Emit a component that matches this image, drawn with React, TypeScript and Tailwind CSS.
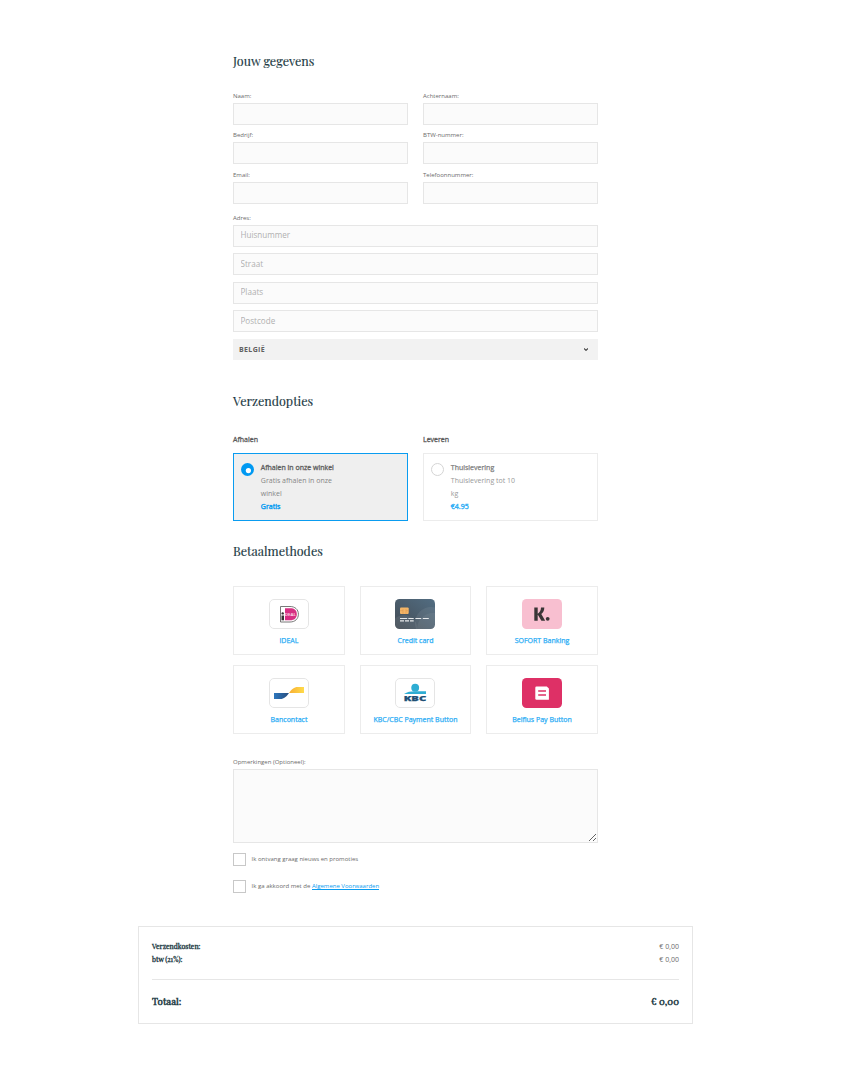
import React from "react";

function Heading({ children, className }: { children: React.ReactNode; className: string }) {
  return (
    <h2
      className={`h-5 whitespace-nowrap font-['Playfair_Display','Liberation_Serif',serif] text-[12.5px] leading-[18px] text-[#1d3a44] [-webkit-text-stroke:0.15px_#1d3a44] ${className}`}
    >
      {children}
    </h2>
  );
}

function Field({ label }: { label: string }) {
  return (
    <label className="block">
      <span className="block h-[11px] text-[6px] leading-[8px]">{label}</span>
      <input className="block h-[22px] w-full border border-[#e6e6e6] bg-[#fbfbfb] px-1.5 outline-none" />
    </label>
  );
}

function AddressInput({ placeholder, className }: { placeholder: string; className: string }) {
  return (
    <input
      placeholder={placeholder}
      className={`block h-[22px] w-full border border-[#e6e6e6] bg-[#fbfbfb] pl-[6.5px] text-[8.1px] outline-none placeholder:text-[#b0b0b0] ${className}`}
    />
  );
}

function Payment({ label, children }: { label: string; children: React.ReactNode }) {
  return (
    <button className="flex h-[69px] flex-col items-center border border-[#ececec] pt-3">
      <svg width="40" height="30" viewBox="0 0 40 30" className="block group-odd:ml-0">
        {children}
      </svg>
      <span className="mt-[7px] whitespace-nowrap text-[7px] leading-[10px] text-[#2badf5] [-webkit-text-stroke:0.25px_#2badf5]">
        {label}
      </span>
    </button>
  );
}

const Frame = () => (
  <rect x="0.5" y="0.5" width="39" height="29" rx="4.5" fill="#fff" stroke="#e5e5e5" />
);

export default function App() {
  return (
    <main className="min-h-[1075px] w-[856px] bg-white pt-[52px] font-['Open_Sans',sans-serif] text-[#6b6b6b]">
      <form className="ml-[233px] w-[365px]">
        <Heading className="">Jouw gegevens</Heading>
        <div className="mt-5 grid grid-cols-2 gap-x-[15px]">
          <div className="h-[39px]"><Field label="Naam:" /></div>
          <div className="h-[39px]"><Field label="Achternaam:" /></div>
          <div className="h-10"><Field label="Bedrijf:" /></div>
          <div className="h-10"><Field label="BTW-nummer:" /></div>
          <div className="h-[43px]"><Field label="Email:" /></div>
          <div className="h-[43px]"><Field label="Telefoonnummer:" /></div>
        </div>
        <div className="h-[11px] text-[6px] leading-[8px]">Adres:</div>
        <AddressInput placeholder="Huisnummer" className="pb-[4px]" />
        <AddressInput placeholder="Straat" className="mt-1.5 pb-[2px]" />
        <AddressInput placeholder="Plaats" className="mt-[7px] pb-[4px]" />
        <AddressInput placeholder="Postcode" className="mt-1.5 pb-[2px]" />
        <div className="mt-[7px] flex h-[21px] items-center justify-between bg-[#f2f2f2] pl-1.5 pr-[10px] text-[7px] font-bold tracking-[0.35px] text-[#606060]">
          <span className="pt-px">BELGIË</span>
          <svg width="4" height="3" viewBox="0 0 4 3" fill="none" stroke="#444" strokeWidth="1.1">
            <path d="M0 .5 2 2.4 4 .5" />
          </svg>
        </div>

        <Heading className="mt-8">Verzendopties</Heading>
        <div className="mt-[23px] grid grid-cols-2 gap-x-[15px]">
          <div>
            <h3 className="h-[18px] text-[7px] leading-[10px] text-[#5a5a5a] [-webkit-text-stroke:0.3px_#5a5a5a]">Afhalen</h3>
            <div className="flex h-[68px] border border-[#0a9cf0] bg-[#efefef] pl-[7px] pt-[7px]">
              <svg width="13" height="13" viewBox="0 0 13 13" className="mt-[2px]">
                <circle cx="6.5" cy="6.5" r="6.5" fill="#0099f2" />
                <circle cx="7.4" cy="7.6" r="2.6" fill="#fff" />
              </svg>
              <div className="ml-[6.8px] whitespace-nowrap text-[7px] leading-[13px] text-[#858585]">
                <p className="text-[#606060] [-webkit-text-stroke:0.3px_#606060]">Afhalen in onze winkel</p>
                <p>Gratis afhalen in onze</p>
                <p>winkel</p>
                <p className="text-[#0a9cf0] [-webkit-text-stroke:0.4px_#0a9cf0]">Gratis</p>
              </div>
            </div>
          </div>
          <div>
            <h3 className="h-[18px] text-[7px] leading-[10px] text-[#5a5a5a] [-webkit-text-stroke:0.3px_#5a5a5a]">Leveren</h3>
            <div className="flex h-[68px] border border-[#ececec] pl-[7px] pt-[7px]">
              <svg width="13" height="13" viewBox="0 0 13 13" className="mt-[2px]">
                <circle cx="6.5" cy="6.5" r="6" fill="#fff" stroke="#d4d4d4" />
              </svg>
              <div className="ml-[6.8px] whitespace-nowrap text-[7px] leading-[13px] text-[#999]">
                <p className="text-[#808080] [-webkit-text-stroke:0.25px_#808080]">Thuislevering</p>
                <p>Thuislevering tot 10</p>
                <p>kg</p>
                <p className="text-[#35b0f5] [-webkit-text-stroke:0.4px_#35b0f5]">€4.95</p>
              </div>
            </div>
          </div>
        </div>

        <Heading className="mt-[21px]">Betaalmethodes</Heading>
        <div className="mt-6 grid grid-cols-[112px_111px_112px] gap-x-[15px] gap-y-[10px] [&>button:nth-child(3n+2)>svg]:-ml-px">
          <Payment label="iDEAL">
            <Frame />
            <path d="M11.5 7.5H21C26 7.5 29.4 10.5 29.4 15.2S26 23 21 23h-9.5Z" fill="#fff" stroke="#6a6a6a" strokeWidth="0.9" />
            <path d="M16 9.3h5.2c4 0 6.6 2 6.6 5.9s-2.6 6-6.6 6H16Z" fill="#d62f82" />
            <circle cx="13.7" cy="14.4" r="1.2" fill="#333" />
            <path d="M12.5 16.5H15v4.8h-2.5Z" fill="#333" />
            <text x="15.8" y="16.8" fontSize="4.2" fontWeight="600" fill="#ffe6f3" textLength="11.2" lengthAdjust="spacingAndGlyphs">DEAL</text>
          </Payment>
          <Payment label="Credit card">
            <defs>
              <linearGradient id="card" x1="0" y1="1" x2="1" y2="0">
                <stop stopColor="#434c55" />
                <stop offset="1" stopColor="#526d82" />
              </linearGradient>
              <clipPath id="cardClip"><rect width="40" height="30" rx="4.5" /></clipPath>
            </defs>
            <g clipPath="url(#cardClip)">
              <rect width="40" height="30" fill="url(#card)" />
              <circle cx="9" cy="29" r="13" fill="#fff" opacity=".07" />
              <circle cx="36" cy="24" r="16" fill="#fff" opacity=".07" />
              <circle cx="38" cy="30" r="16" fill="#fff" opacity=".06" />
            </g>
            <rect x="5" y="8.6" width="8.7" height="6.5" rx="1" fill="#f3b567" />
            <path d="M8 10V15M11 10V15M5 11.7h3m3 0h3" stroke="#dc954c" strokeWidth=".5" />
            <path d="M5 19.5h7.2m1.1 0h5.4m1.7 0h5.8m1.6 0h6M5 21.8h4m1 0h4m1 0h3.7" stroke="#e7eaec" strokeWidth="1.2" />
          </Payment>
          <Payment label="SOFORT Banking">
            <rect width="40" height="30" rx="4.5" fill="#f8bfd0" />
            <path d="M12.3 8.5h3.4v13.3h-3.4ZM19 8.5h3.3c0 2.9-1 5-3 6.6l3.9 6.7h-3.8l-4-6.7c2.3-1.5 3.6-3.7 3.6-6.6Z" fill="#393536" />
            <circle cx="25.7" cy="19.8" r="1.9" fill="#393536" />
          </Payment>
          <Payment label="Bancontact">
            <Frame />
            <defs>
              <linearGradient id="bcBlue"><stop stopColor="#2d77be" /><stop offset="1" stopColor="#294d7d" /></linearGradient>
              <linearGradient id="bcYellow"><stop stopColor="#f8ae32" /><stop offset="1" stopColor="#ffdb4b" /></linearGradient>
            </defs>
            <path d="M5 15h15c-2.5 3.5-5 6-8.7 6H5Z" fill="url(#bcBlue)" />
            <path d="M20 15c2.5-3.5 5-6 8.7-6H35v6Z" fill="url(#bcYellow)" />
          </Payment>
          <Payment label="KBC/CBC Payment Button">
            <Frame />
            <circle cx="20.2" cy="9.7" r="3.9" fill="#2eadd3" />
            <path d="M9 16c3-2.2 7-2.8 10.5-2.8H31V16Z" fill="#2eadd3" />
            <text x="8.7" y="22.8" fontFamily="Open Sans" fontSize="7.6" fontWeight="800" fill="#204f75" stroke="#204f75" strokeWidth=".25" textLength="22.5" lengthAdjust="spacingAndGlyphs">KBC</text>
          </Payment>
          <Payment label="Belfius Pay Button">
            <rect width="40" height="30" rx="4.5" fill="#de3066" />
            <path d="M14.5 8.5h10.3L26.9 10.5v11.2H14.5Q13.3 21.7 13.3 20.5V9.8Q13.3 8.5 14.5 8.5Z" fill="#fff" />
            <path d="M16.2 13h7.8M16.2 17h7.8" stroke="#de3066" strokeWidth="1.4" />
          </Payment>
        </div>

        <label className="mt-6 block">
          <span className="block h-[11px] text-[6px] leading-[8px]">Opmerkingen (Optioneel):</span>
          <textarea className="block h-[74px] w-full resize border border-[#e6e6e6] bg-[#fbfbfb] outline-none" />
        </label>
        <label className="mt-[10px] flex h-[13px] items-center gap-[5.6px] text-[6px]">
          <input type="checkbox" className="size-[13px] appearance-none border border-[#c8c8c8] bg-white" />
          <span className="pb-px leading-[8px]">Ik ontvang graag nieuws en promoties</span>
        </label>
        <label className="mt-[14px] flex h-[13px] items-center gap-[5.6px] text-[6px]">
          <input type="checkbox" className="size-[13px] appearance-none border border-[#c8c8c8] bg-white" />
          <span className="pb-[2px] leading-[8px]">
            Ik ga akkoord met de{" "}
            <a className="inline-block h-[8px] border-b border-[#0a9cf0] leading-[8px] text-[#0a9cf0]">Algemene Voorwaarden</a>
          </span>
        </label>
      </form>

      <section className="ml-[138px] mt-[33px] h-[98px] w-[555px] border border-[#e6e6e6] px-[13px] pt-[13px] font-['Playfair_Display','Liberation_Serif',serif] text-[7px] leading-[13px] text-[#1d3a44]">
        <div className="flex justify-between">
          <span className="[-webkit-text-stroke:0.35px_#1d3a44]">Verzendkosten:</span>
          <span className="font-['Open_Sans',sans-serif] text-[7px] text-[#6b6b6b]">€ 0,00</span>
        </div>
        <div className="flex justify-between">
          <span className="[-webkit-text-stroke:0.35px_#1d3a44]">btw (21%):</span>
          <span className="font-['Open_Sans',sans-serif] text-[7px] text-[#6b6b6b]">€ 0,00</span>
        </div>
        <div className="mt-[13px] flex justify-between border-t border-[#e6e6e6] pt-[15px] text-[9.7px] [-webkit-text-stroke:0.5px_#1d3a44]">
          <span>Totaal:</span>
          <span>€ 0,00</span>
        </div>
      </section>
    </main>
  );
}
